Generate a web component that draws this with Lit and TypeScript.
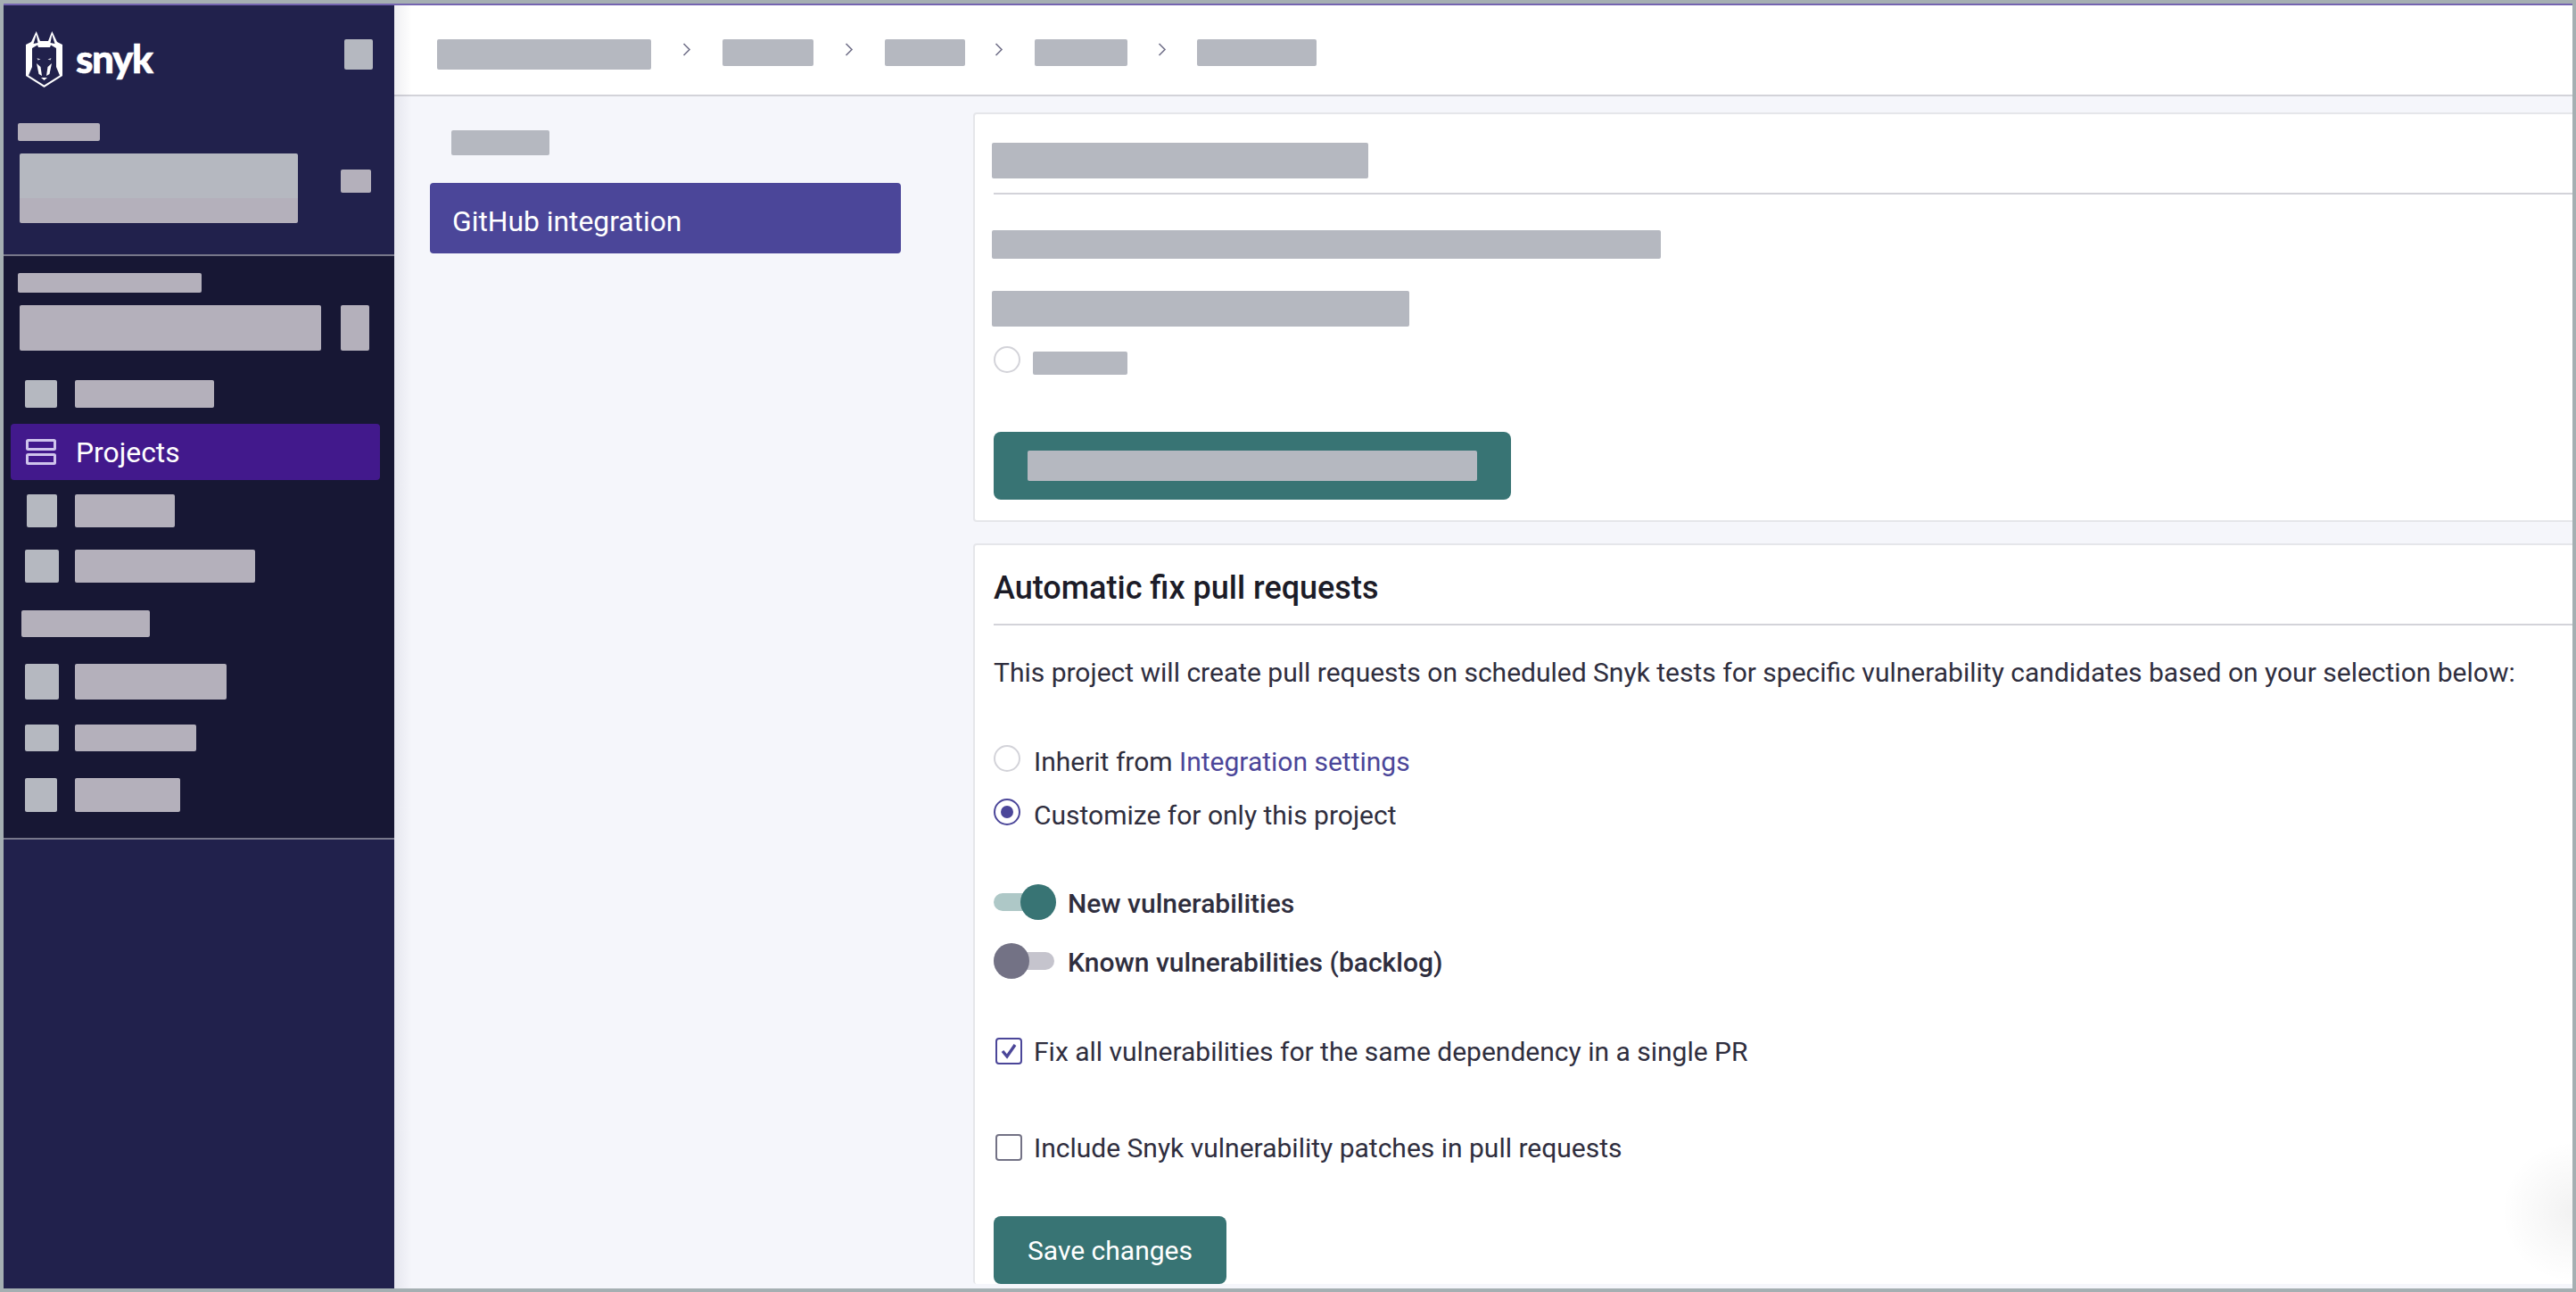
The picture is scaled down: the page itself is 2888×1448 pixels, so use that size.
import { LitElement, html, css, nothing } from 'lit';
import { customElement } from 'lit/decorators.js';
import { styleMap } from 'lit/directives/style-map.js';

type NavRow = { iconW: number; iconX?: number; bar: number; h: number; gap: number };

const topRows: NavRow[] = [
  { iconW: 36, bar: 156, h: 31, gap: 33 },
];
const midRows: NavRow[] = [
  { iconW: 34, iconX: 2, bar: 112, h: 37, gap: 16 },
  { iconW: 38, bar: 202, h: 37, gap: 25 },
];
const lowRows: NavRow[] = [
  { iconW: 38, bar: 170, h: 40, gap: 30 },
  { iconW: 38, bar: 136, h: 30, gap: 28 },
  { iconW: 36, bar: 118, h: 38, gap: 30 },
];
// left/right is the space on each side of the chevron in front of the crumb
const crumbs = [
  { w: 240, h: 34, left: 0, right: 0 },
  { w: 102, h: 30, left: 35, right: 35 },
  { w: 90, h: 30, left: 35, right: 35 },
  { w: 104, h: 30, left: 33, right: 35 },
  { w: 134, h: 30, left: 34, right: 34 },
];

@customElement('app-root')
export class AppRoot extends LitElement {
  static styles = css`
    :host {
      display: block;
      width: 100vw;
      height: 100vh;
      box-sizing: border-box;
      border: 4px solid #a5afb2;
      overflow: hidden;
      background: #fff;
      font-family: Roboto, "Liberation Sans", sans-serif;
      color: #2f2e3e;
    }
    * { box-sizing: border-box; }
    .shell { display: flex; flex-direction: column; height: 100%; position: relative; }
    .accent { height: 2px; flex: none; background: #7464b0; }
    .frame { flex: 1; display: flex; min-height: 0; }

    .sk { flex: none; border-radius: 2px; background: #b5b8c0; }
    .sk.warm { background: #b4b0bb; }

    /* sidebar */
    .sidebar { width: 438px; flex: none; background: #21214c; display: flex; flex-direction: column; }
    .org { height: 281px; flex: none; padding-top: 29px; border-bottom: 2px solid #77778a; }
    .brand { display: flex; justify-content: space-between; align-items: flex-start; padding: 0 24px 0 25px; }
    .logo { display: flex; align-items: flex-start; gap: 15px; height: 63px; }
    .logo svg { width: 41px; height: 63px; display: block; }
    .wordmark { font-family: Lato, sans-serif; font-weight: 900; font-size: 44px; line-height: 63px; letter-spacing: -1.4px; color: #fff; margin-top: -1px; -webkit-text-stroke: 0.6px #fff; }
    .collapse { width: 32px; height: 34px; margin-top: 9px; }
    .org-label { width: 92px; height: 20px; margin: 40px 0 0 16px; }
    .org-switch { display: flex; align-items: flex-start; margin: 14px 0 0 18px; }
    .org-name { width: 312px; height: 78px; border-radius: 2px; overflow: hidden; }
    .org-name div { height: 50px; background: #b5b8c0; }
    .org-name div + div { height: 28px; background: #b4b0bb; }
    .org-caret { width: 34px; height: 26px; margin: 18px 0 0 48px; }

    .group { height: 654px; flex: none; background: #171734; padding-top: 19px; border-bottom: 2px solid #77778a; }
    .group-label { width: 206px; height: 22px; margin-left: 16px; }
    .group-switch { display: flex; gap: 22px; margin: 14px 0 0 18px; }
    .group-name { width: 338px; height: 51px; }
    .group-caret { width: 32px; height: 51px; }
    .row { display: flex; align-items: stretch; padding-left: 24px; }
    .row-icon { flex: none; width: 56px; display: flex; }
    .row-icon .sk { height: 100%; }
    .active {
      display: flex;
      align-items: center;
      height: 63px;
      margin: 18px 16px 0 8px;
      padding-left: 17px;
      border-radius: 4px;
      background: #42198c;
      color: #fff;
      font-size: 31.8px;
    }
    .active svg { width: 34px; height: 29px; margin-right: 22px; flex: none; }
    .section-label { width: 144px; height: 30px; margin: 31px 0 0 20px; }

    /* main */
    .main { flex: 1; min-width: 0; display: flex; flex-direction: column; position: relative; }
    .main::before {
      content: '';
      position: absolute;
      inset: 0 auto 0 0;
      width: 20px;
      background: linear-gradient(90deg, rgba(33, 33, 76, 0.07), rgba(33, 33, 76, 0));
      z-index: 2;
    }
    .crumbs {
      height: 102px;
      flex: none;
      display: flex;
      align-items: flex-start;
      padding: 38px 0 0 48px;
      border-bottom: 2px solid #d3d3d9;
    }
    .chevron { width: 10px; height: 15px; margin-top: 4px; flex: none; }
    .body { flex: 1; min-height: 0; display: flex; background: #f5f6fb; }
    .subnav { width: 649px; flex: none; padding: 38px 0 0 40px; }
    .subnav-label { width: 110px; height: 28px; margin-left: 24px; }
    .subnav-item {
      width: 528px;
      height: 79px;
      margin-top: 31px;
      padding: 6px 0 0 25px;
      display: flex;
      align-items: center;
      border-radius: 4px;
      background: #4b4699;
      color: #fff;
      font-size: 31.8px;
    }
    .content { flex: 1; min-width: 0; padding-top: 18px; }
    .card {
      margin-right: -6px;
      border: 2px solid #e5e6ea;
      border-radius: 4px;
      background: #fff;
    }
    .card + .card { margin-top: 24px; border-bottom: 0; }
    .card-one { height: 459px; padding-top: 32px; }
    .card-title { width: 422px; height: 40px; margin-left: 19px; }
    .rule { height: 2px; margin-left: 21px; background: #d3d3d9; }
    .card-one .rule { margin-top: 16px; }
    .ph-wide { width: 750px; height: 32px; margin: 40px 0 0 19px; }
    .ph-mid { width: 468px; height: 40px; margin: 36px 0 0 19px; }
    .ph-radio { display: flex; margin: 22px 0 0 21px; }
    .ph-radio-label { width: 106px; height: 26px; margin: 6px 0 0 -1px; }
    .btn {
      display: flex;
      align-items: center;
      margin-left: 21px;
      padding: 0 38px;
      height: 76px;
      border-radius: 8px;
      background: #387474;
      color: #fff;
      font-size: 30px;
      width: fit-content;
    }
    .btn.ph { margin-top: 64px; }
    .btn-label { width: 504px; height: 34px; }

    .heading {
      height: 88px;
      margin: 0 0 0 21px;
      display: flex;
      align-items: center;
      padding-top: 8px;
      font-size: 36px;
      font-weight: 500;
      line-height: 1;
      color: #1c1c28;
    }
    .lead { margin: 33px 0 0 21px; font-size: 30px; line-height: 40px; white-space: nowrap; }
    .option { display: flex; align-items: flex-start; margin-left: 21px; height: 30px; font-size: 30px; line-height: 38px; white-space: nowrap; }
    .radio { width: 30px; height: 30px; flex: none; border: 2px solid #d3d3d9; border-radius: 50%; margin-right: 15px; display: flex; align-items: center; justify-content: center; }
    .radio.on { border-color: #4b4699; }
    .radio.on::after { content: ''; width: 14px; height: 14px; border-radius: 50%; background: #4b4699; }
    .link { color: #4b4699; }
    .inherit { margin-top: 61px; }
    .customize { margin-top: 30px; }
    .switch { display: flex; align-items: center; gap: 13px; margin-left: 21px; height: 40px; font-size: 30px; font-weight: 500; white-space: nowrap; }
    .switch-label { padding-top: 2px; }
    .switch.new { margin-top: 66px; }
    .switch.known { margin-top: 26px; }
    .toggle { position: relative; width: 70px; height: 40px; flex: none; }
    .track { position: absolute; inset: 10px 2px 10px 0; border-radius: 10px; background: #c5c4cd; }
    .knob { position: absolute; top: 0; left: 0; width: 40px; height: 40px; border-radius: 50%; background: #737285; }
    .toggle.on .track { background: #aec8c7; }
    .toggle.on .knob { left: 30px; background: #387474; }
    .check { margin-left: 23px; margin-top: 78px; line-height: 31px; }
    .check.first { margin-top: 66px; }
    .box { width: 30px; height: 30px; flex: none; margin-right: 13px; border: 2px solid #737285; border-radius: 4px; display: flex; align-items: center; justify-content: center; }
    .box.on { border-color: #4b4699; }
    .box svg { width: 20px; height: 18px; }
    .btn.save { margin-top: 62px; }

    .glow {
      position: absolute;
      right: 0;
      bottom: 6px;
      width: 80px;
      height: 160px;
      background: radial-gradient(ellipse at right center, rgba(0, 0, 0, 0.05), rgba(0, 0, 0, 0) 70%);
      pointer-events: none;
    }
  `;

  private bar(row: NavRow) {
    return html`
      <div class="row" style=${styleMap({ height: `${row.h}px`, marginTop: `${row.gap}px` })}>
        <div class="row-icon">
          <div class="sk" style=${styleMap({ width: `${row.iconW}px`, marginLeft: `${row.iconX ?? 0}px` })}></div>
        </div>
        <div class="sk warm" style=${styleMap({ width: `${row.bar}px` })}></div>
      </div>
    `;
  }

  private logo() {
    return html`
      <svg viewBox="0 0 41 63" aria-hidden="true">
        <path fill="#fff" d="M0 15 6 12 11.7 0 16 11H25L29.3 0 35 12 41 15V50L20.5 63 0 50Z" />
        <path fill="#21214c" d="M8.5 14 11.7 4 13.5 13ZM32.5 14 29.3 4 27.5 13Z" />
        <path fill="#21214c" d="M7 19 13 15.5 14 18H27L28 15.5 34 19V40L38 49.5 20.5 60.5 3 49.5 7 40Z" />
        <path fill="#fff" d="M12 36 16.5 40 18 50 14.5 48ZM29 36 24.5 40 23 50 26.5 48ZM17 52H24L20.5 55Z" />
        <path fill="#fff" opacity=".8" d="M12.5 30 16.5 31.5 13.5 32.5ZM28.5 30 24.5 31.5 27.5 32.5Z" />
      </svg>
    `;
  }

  render() {
    return html`
      <div class="shell">
        <div class="accent"></div>
        <div class="frame">
          <aside class="sidebar">
            <div class="org">
              <div class="brand">
                <div class="logo">${this.logo()}<span class="wordmark">snyk</span></div>
                <div class="sk collapse"></div>
              </div>
              <div class="sk warm org-label"></div>
              <div class="org-switch">
                <div class="org-name"><div></div><div></div></div>
                <div class="sk warm org-caret"></div>
              </div>
            </div>
            <nav class="group">
              <div class="sk warm group-label"></div>
              <div class="group-switch">
                <div class="sk warm group-name"></div>
                <div class="sk warm group-caret"></div>
              </div>
              ${topRows.map((r) => this.bar(r))}
              <div class="active">
                <svg viewBox="0 0 34 29" fill="none" stroke="#cfc4ec" stroke-width="3">
                  <rect x="1.5" y="1.5" width="31" height="10" rx="1" />
                  <rect x="1.5" y="17.5" width="31" height="10" rx="1" />
                </svg>
                Projects
              </div>
              ${midRows.map((r) => this.bar(r))}
              <div class="sk warm section-label"></div>
              ${lowRows.map((r) => this.bar(r))}
            </nav>
          </aside>

          <main class="main">
            <header class="crumbs">
              ${crumbs.map(
                (c, i) => html`
                  ${i > 0
                    ? html`<svg
                        class="chevron"
                        style=${styleMap({ marginLeft: `${c.left}px`, marginRight: `${c.right}px` })}
                        viewBox="0 0 10 15"
                        fill="none"
                        stroke="#72718a"
                        stroke-width="1.6"
                      >
                        <path d="M1.5 1 8 7.5 1.5 14" />
                      </svg>`
                    : nothing}
                  <div class="sk" style=${styleMap({ width: `${c.w}px`, height: `${c.h}px` })}></div>
                `
              )}
            </header>
            <div class="body">
              <div class="subnav">
                <div class="sk subnav-label"></div>
                <div class="subnav-item">GitHub integration</div>
              </div>
              <div class="content">
                <section class="card card-one">
                  <div class="sk card-title"></div>
                  <div class="rule"></div>
                  <div class="sk ph-wide"></div>
                  <div class="sk ph-mid"></div>
                  <div class="ph-radio">
                    <span class="radio"></span>
                    <div class="sk ph-radio-label"></div>
                  </div>
                  <div class="btn ph"><div class="sk btn-label"></div></div>
                </section>
                <section class="card">
                  <h2 class="heading">Automatic fix pull requests</h2>
                  <div class="rule"></div>
                  <p class="lead">This project will create pull requests on scheduled Snyk tests for specific vulnerability candidates based on your selection below:</p>
                  <div class="option inherit">
                    <span class="radio"></span>
                    <span>Inherit from <span class="link">Integration settings</span></span>
                  </div>
                  <div class="option customize">
                    <span class="radio on"></span>
                    <span>Customize for only this project</span>
                  </div>
                  <div class="switch new">
                    <span class="toggle on"><span class="track"></span><span class="knob"></span></span>
                    <span class="switch-label">New vulnerabilities</span>
                  </div>
                  <div class="switch known">
                    <span class="toggle"><span class="track"></span><span class="knob"></span></span>
                    <span class="switch-label">Known vulnerabilities (backlog)</span>
                  </div>
                  <div class="option check first">
                    <span class="box on">
                      <svg viewBox="0 0 20 18" fill="none" stroke="#4b4699" stroke-width="3.4">
                        <path d="M3 9 8 15 17 2" />
                      </svg>
                    </span>
                    <span>Fix all vulnerabilities for the same dependency in a single PR</span>
                  </div>
                  <div class="option check">
                    <span class="box"></span>
                    <span>Include Snyk vulnerability patches in pull requests</span>
                  </div>
                  <div class="btn save">Save changes</div>
                </section>
              </div>
            </div>
          </main>
        </div>
        <div class="glow"></div>
      </div>
    `;
  }
}
